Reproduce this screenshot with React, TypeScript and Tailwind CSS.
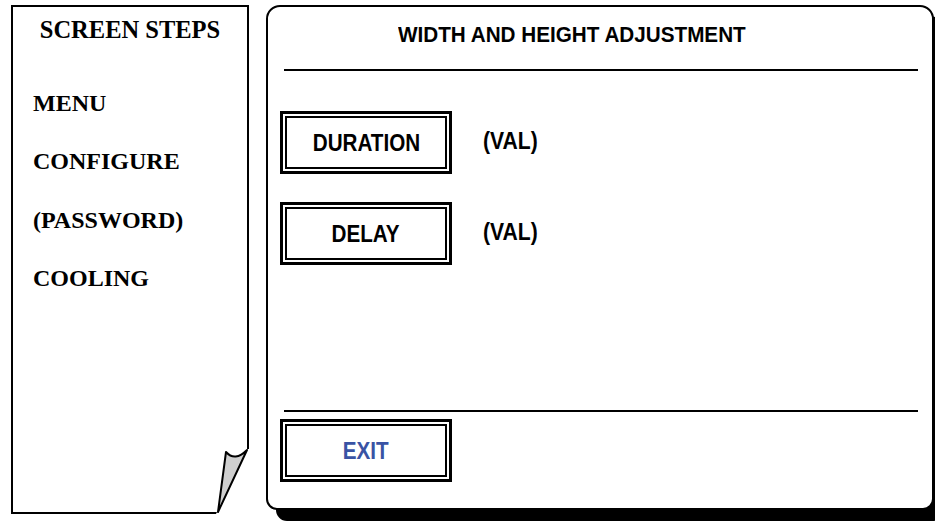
import React from "react";

const sans = { fontFamily: '"Liberation Sans", Arial, sans-serif' };
const serif = { fontFamily: '"Liberation Serif", "Times New Roman", serif' };

function FrameButton({ label, blue }: { label: string; blue?: boolean }) {
  return (
    <div className="w-[172px] h-[63px] border-[3px] border-black p-[2px] bg-white">
      <div className="w-full h-full border-2 border-black flex items-center justify-center">
        <span
          style={sans}
          className={`inline-block scale-x-[0.86] text-[24px] leading-[28px] font-bold ${blue ? "text-[#3953a4]" : "text-black"}`}
        >
          {label}
        </span>
      </div>
    </div>
  );
}

function Val() {
  return (
    <span style={sans} className="inline-block origin-left scale-x-[0.88] text-[24px] leading-[28px] font-bold text-black -mt-[3px]">
      (VAL)
    </span>
  );
}

export default function App() {
  return (
    <div className="w-[935px] h-[521px] bg-white overflow-hidden flex pt-[5px] pl-[11px] gap-[17px]">
      {/* Left: screen steps page with folded corner */}
      <div className="relative w-[238px] h-[509px] border-2 border-black bg-white" style={serif}>
        <div className="pt-[9px] text-center text-[24.5px] leading-[28px] font-bold text-black">SCREEN STEPS</div>
        <div className="mt-[45px] pl-[20px] flex flex-col gap-[30.3px] text-[24px] leading-[28px] font-bold text-black">
          <div>MENU</div>
          <div>CONFIGURE</div>
          <div>(PASSWORD)</div>
          <div>COOLING</div>
        </div>
        <svg
          className="absolute right-[-2px] bottom-[-2px]"
          width="40"
          height="70"
          viewBox="0 0 40 70"
        >
          <polygon points="38,5 40,5 40,70 7,70 9,66" fill="#fff" />
          <path d="M17,8 Q26,18 38,6 L9,68 Z" fill="#cfcfcf" stroke="#000" strokeWidth="2" strokeLinejoin="round" />
        </svg>
      </div>

      {/* Right: adjustment panel */}
      <div className="w-[668px] h-[505px] border-2 border-black rounded-t-[14px] rounded-b-[11px] bg-white shadow-[10px_11px_0_0_#000] flex flex-col">
        <div className="h-[62px] pt-[15px] pl-[130px]">
          <span style={sans} className="inline-block origin-left scale-x-[0.94] text-[22px] leading-[26px] font-bold text-black">
            WIDTH AND HEIGHT ADJUSTMENT
          </span>
        </div>
        <div className="h-[2px] bg-black ml-[16px] mr-[14px]" />
        <div className="mt-[40px] pl-[12px] flex items-center gap-[31px]">
          <FrameButton label="DURATION" />
          <Val />
        </div>
        <div className="mt-[28px] pl-[12px] flex items-center gap-[31px]">
          <FrameButton label="DELAY" />
          <Val />
        </div>
        <div className="mt-[145px] h-[2px] bg-black ml-[16px] mr-[14px]" />
        <div className="mt-[7px] pl-[12px]">
          <FrameButton label="EXIT" blue />
        </div>
      </div>
    </div>
  );
}
